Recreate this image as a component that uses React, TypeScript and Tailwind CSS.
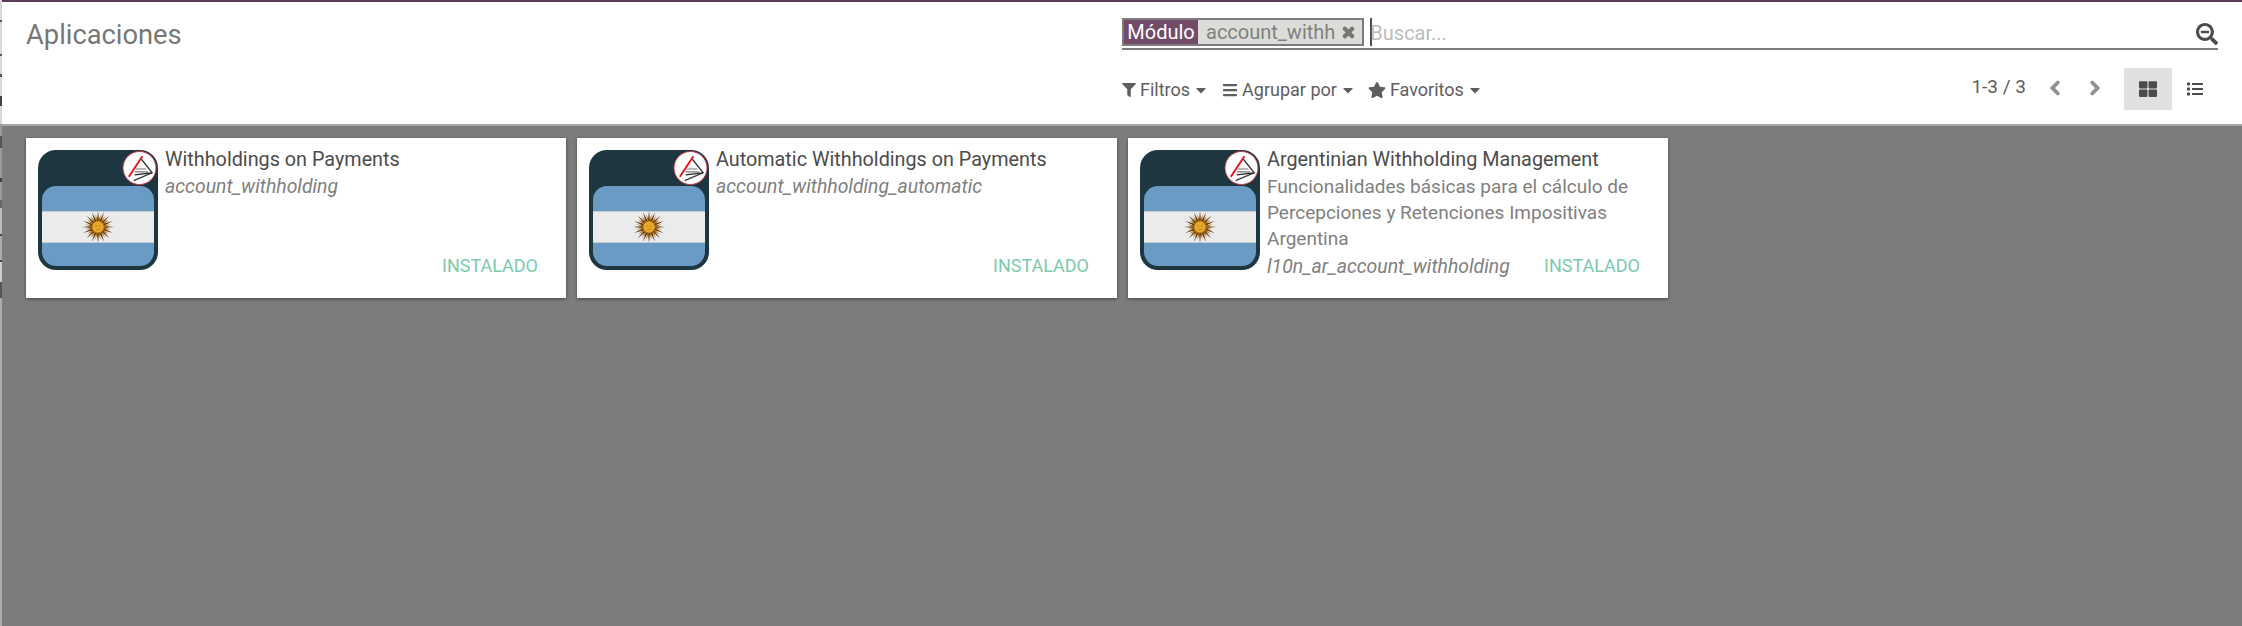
import React from "react";
import {
  FaCaretDown,
  FaChevronLeft,
  FaChevronRight,
  FaBars,
  FaFilter,
  FaList,
  FaSearchMinus,
  FaStar,
  FaThLarge,
  FaTimes,
} from "react-icons/fa";

const rays = Array.from({ length: 32 }, (_, i) => {
  const a = (i * Math.PI * 2) / 32;
  const r = i % 2 === 0 ? 16 : 13;
  const p = (ang: number, rad: number) =>
    `${(16 + Math.cos(ang) * rad).toFixed(2)},${(16 + Math.sin(ang) * rad).toFixed(2)}`;
  return `${p(a - 0.2, 5.5)} ${p(a, r)} ${p(a + 0.2, 5.5)}`;
});

const Sun = () => (
  <svg viewBox="0 0 32 32" className="w-[32px] h-[32px]">
    {rays.map((pts, i) => (
      <polygon key={i} points={pts} fill={i % 2 === 0 ? "#5e3208" : "#b57518"} />
    ))}
    <circle cx="16" cy="16" r="6" fill="#e8a82a" stroke="#8f5c14" strokeWidth="0.5" />
    <circle cx="14" cy="15" r="0.7" fill="#a8701c" />
    <circle cx="18" cy="15" r="0.7" fill="#a8701c" />
    <path d="M14 18.5h4" stroke="#c07a30" strokeWidth="0.7" />
  </svg>
);

const Badge = () => (
  <svg viewBox="0 0 36 36" className="absolute right-[1px] top-0 w-[35px] h-[36px]">
    <circle cx="18" cy="18" r="17" fill="#fff" stroke="#c8363f" strokeWidth="1" />
    <path d="M7 27 L21 6" stroke="#e8141c" strokeWidth="2" />
    <path d="M20 9 L31 23 L12 31" fill="none" stroke="#333" strokeWidth="1.3" />
    <path d="M14 19h11M13 22h14" stroke="#777" strokeWidth="1.1" />
    <path d="M13 25 L31 23" stroke="#222" strokeWidth="1.3" />
  </svg>
);

const ModuleIcon = () => (
  <div className="relative w-[120px] h-[120px] shrink-0 rounded-[18px] bg-[#1e3640] p-[4px] pt-[36px]">
    <Badge />
    <div className="flex flex-col h-full rounded-[14px] overflow-hidden bg-[#6a9bc4]">
      <div className="h-[25px] shrink-0" />
      <div className="h-[32px] shrink-0 bg-[#ebebeb] border-y border-[#c4cdd4] flex items-center justify-center">
        <Sun />
      </div>
    </div>
  </div>
);

type AppCard = {
  title: string;
  summary?: string;
  tech: string;
};

const cards: AppCard[] = [
  { title: "Withholdings on Payments", tech: "account_withholding" },
  { title: "Automatic Withholdings on Payments", tech: "account_withholding_automatic" },
  {
    title: "Argentinian Withholding Management",
    summary: "Funcionalidades básicas para el cálculo de Percepciones y Retenciones Impositivas Argentina",
    tech: "l10n_ar_account_withholding",
  },
];

const Card = ({ card }: { card: AppCard }) => (
  <div className="relative w-[540px] h-[160px] bg-white flex gap-[7px] pl-[12px] pt-[10px] shadow-[0_1px_3px_rgba(0,0,0,0.45)]">
    <div className="pt-[2px]">
      <ModuleIcon />
    </div>
    <div className="flex-1 min-w-0">
      <div className="text-[19.8px] leading-[24px] text-[#4c4c4c]">{card.title}</div>
      {card.summary && (
        <div className="text-[19px] leading-[26px] text-[#808080] mt-[2px] w-[395px]">{card.summary}</div>
      )}
      <div className="text-[19.4px] leading-[26px] italic text-[#808080] mt-[2px]">{card.tech}</div>
    </div>
    <span className="absolute right-[28px] bottom-[20px] text-[18px] leading-[24px] text-[#7dc9ac]">INSTALADO</span>
  </div>
);

const FilterButton = ({ icon, label }: { icon: React.ReactNode; label: string }) => (
  <div className="flex items-center gap-[4px] text-[#5e5e5e] text-[18px] leading-[24px]">
    {icon}
    <span>{label}</span>
    <FaCaretDown className="w-[14px] h-[16px]" />
  </div>
);

export default function App() {
  return (
    <div className="w-[2242px] h-[626px] flex bg-[#7c7c7c] font-['Roboto',sans-serif]">
      <div className="w-[2px] shrink-0 bg-[linear-gradient(180deg,#d8d8d8_0,#d8d8d8_20px,#555_20px,#555_22px,#d8d8d8_22px,#d8d8d8_54px,#555_54px,#555_56px,#d8d8d8_56px,#d8d8d8_74px,#555_74px,#555_77px,#d8d8d8_77px,#d8d8d8_96px,#444_96px,#444_106px,#d8d8d8_106px,#d8d8d8_124px,#999_124px,#999_136px,#555_136px,#555_148px,#999_148px,#999_178px,#444_178px,#444_182px,#999_182px,#999_200px,#666_200px,#666_208px,#bbb_208px,#bbb_234px,#444_234px,#444_236px,#aaa_236px,#aaa_260px,#444_260px,#444_262px,#ccc_262px,#ccc_282px,#555_282px,#555_298px,#aaa_298px,#aaa_100%)]" />
      <div className="flex-1 flex flex-col min-w-0">
        <div className="h-[2px] shrink-0 bg-[#5a3a55]" />
        <header className="h-[124px] shrink-0 bg-white border-b-[2px] border-[#a8a8a8] pl-[24px] pr-[24px] flex">
          <h1 className="w-[1096px] shrink-0 pt-[15px] text-[27.3px] leading-[36px] text-[#777777]">Aplicaciones</h1>
          <div className="flex-1 flex flex-col">
            <div className="mt-[16px] h-[32px] border-b-[2px] border-[#7c7c7c] flex items-start">
              <div className="flex h-[28px] border-[2px] border-[#7c7c7c] text-[20px] leading-[24px] bg-[#dcddd9]">
                <span className="w-[74px] bg-[#714b67] text-white text-center">Módulo</span>
                <span className="pl-[8px] pr-[6px] text-[#808080] flex items-center gap-[6px]">
                  account_withh
                  <FaTimes stroke="currentColor" strokeWidth={50} className="w-[15px] h-[15px] text-[#777777]" />
                </span>
              </div>
              <div className="ml-[6px] h-[28px] border-l-[2px] border-[#4a4a4a] text-[20px] leading-[31px] text-[#bdbdbd]">
                <span className="ml-[-2px]">Buscar...</span>
              </div>
              <FaSearchMinus className="ml-auto mt-[5px] w-[22px] h-[22px] text-[#4c4c4c]" />
            </div>
            <div className="mt-[18px] flex items-start">
              <div className="flex gap-[14px] mt-[10px]">
                <FilterButton icon={<FaFilter className="w-[14px] h-[14px]" />} label="Filtros" />
                <FilterButton icon={<FaBars className="w-[16px] h-[16px]" />} label="Agrupar por" />
                <FilterButton icon={<FaStar className="w-[18px] h-[16px] ml-[-1px]" />} label="Favoritos" />
              </div>
              <div className="ml-auto flex items-start text-[#5e5e5e]">
                <span className="text-[19px] leading-[24px] mt-[7px]">1-3 / 3</span>
                <FaChevronLeft stroke="currentColor" strokeWidth={40} className="ml-[22px] mt-[12px] w-[14px] h-[16px] text-[#909090]" />
                <FaChevronRight stroke="currentColor" strokeWidth={40} className="ml-[26px] mt-[12px] w-[14px] h-[16px] text-[#909090]" />
                <div className="ml-[22px] w-[48px] h-[42px] bg-[#e0e0e0] flex items-center justify-center">
                  <FaThLarge className="w-[18px] h-[18px] text-[#4c4c4c]" />
                </div>
                <div className="w-[46px] h-[42px] flex items-center justify-center">
                  <FaList className="w-[18px] h-[16px] text-[#4c4c4c]" />
                </div>
              </div>
            </div>
          </div>
        </header>
        <main className="flex gap-[11px] pl-[24px] pt-[12px]">
          {cards.map((c) => (
            <Card key={c.tech} card={c} />
          ))}
        </main>
      </div>
    </div>
  );
}
